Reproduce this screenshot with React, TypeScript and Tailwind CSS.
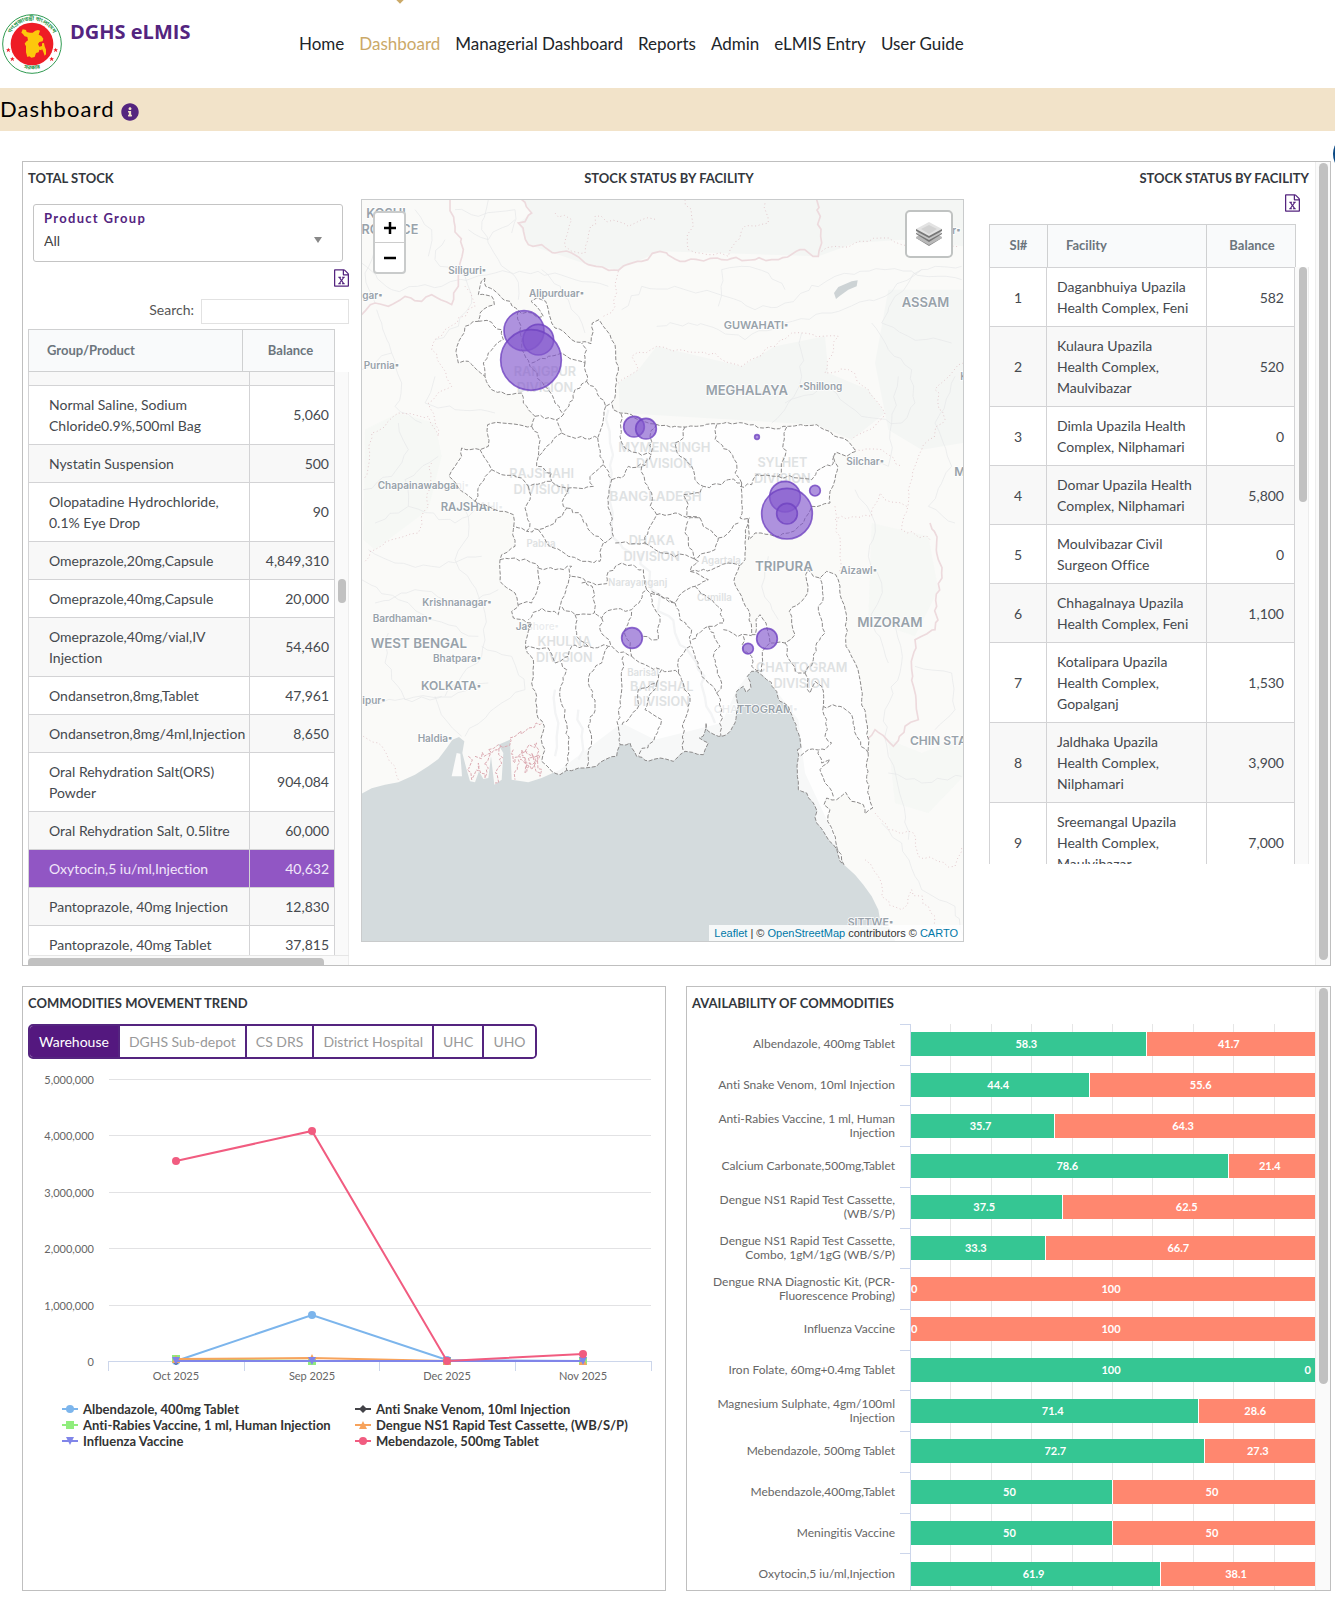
import { FaInfoCircle } from "react-icons/fa";

type Pt = [number, number];

/* ---------- shared pieces ---------- */

function ExcelIcon() {
  return (
    <svg viewBox="0 0 1536 1792" className="h-[18px] w-[15px]" fill="#54247f" aria-hidden="true">
      <path d="M1468 380q28 28 48 76t20 88v1152q0 40-28 68t-68 28h-1344q-40 0-68-28t-28-68v-1600q0-40 28-68t68-28h896q40 0 88 20t76 48zm-444-244v376h376q-10-29-22-41l-313-313q-12-12-41-22zm384 1528v-1024h-416q-40 0-68-28t-28-68v-416h-768v1536h1280zm-979-234v106h281v-106h-75l103-161q5-7 10-16.5t7.5-13.5 3.5-4h2q1 4 5 10 2 4 4.500 7.500t6 8 6.500 8.500l107 161h-76v106h291v-106h-68l-192-273 195-282h67v-107h-279v107h74l-103 159q-4 7-10 16.500t-9 13.500l-2 3h-2q-1-4-5-10-6-11-17-23l-106-159h76v-107h-290v107h68l189 272-194 283h-68z" />
    </svg>
  );
}

function PanelTitle({ children, align = "text-left" }: { children: string; align?: string }) {
  return <h2 className={"pt-1.5 text-[13px] leading-[21px] font-bold text-[#33373d] " + align}>{children}</h2>;
}

/* ---------- header ---------- */

function Logo() {
  return (
    <svg viewBox="0 0 180 180" className="h-[60px] w-[60px]" role="img" aria-label="Government seal">
      <circle cx="90" cy="90" r="88" fill="#fff" stroke="#2f9a51" strokeWidth="3" />
      <circle cx="90" cy="90" r="64" fill="#ee1c25" />
      <path
        fill="#fdc70c"
        d="M58 56l4-10 10 2 2 6 10 2 8 0 8-6 8-2 6 2-4 12 8 4 6 8-2 8-10 2-4 6 4 8 8-2 0-8 6-1 2 10 4 10 0 14-4 4-4-12-4-8-2 4-6-2-2 8-8 2-4 12-10 2-6-4-6 2-4-14 0-18-4-8 4-6 6-4-2-10-8-2-6-8z"
      />
      <defs>
        <path id="seal-top" d="M20 102a71 71 0 1 1 140 0" />
        <path id="seal-bottom" d="M42 150a79 79 0 0 0 96 0" />
      </defs>
      <g fill="#2f9a51" fontFamily="'Noto Sans Bengali','Noto Sans',sans-serif" fontSize="17" fontWeight="700">
        <text textAnchor="middle"><textPath href="#seal-top" startOffset="50%">গণপ্রজাতন্ত্রী বাংলাদেশ</textPath></text>
        <text textAnchor="middle"><textPath href="#seal-bottom" startOffset="50%">সরকার</textPath></text>
      </g>
      {[[19, 108], [31, 135], [149, 135], [161, 108]].map(([x, y]) => (
        <path key={x} fill="#ee1c25" transform={`translate(${x} ${y})`} d="M0-7l2 5 5 0-4 3 2 6-5-4-5 4 2-6-4-3 5 0z" />
      ))}
    </svg>
  );
}

const nav = ["Home", "Dashboard", "Managerial Dashboard", "Reports", "Admin", "eLMIS Entry", "User Guide"];

function Header() {
  return (
    <header className="flex h-[88px] items-start overflow-hidden">
      <div className="flex w-[299px] shrink-0 pt-[14px] pl-0.5">
        <Logo />
        <span className="ml-2 pt-1 font-['Open_Sans',sans-serif] text-[20px] leading-7 font-bold text-[#54247f]">DGHS eLMIS</span>
      </div>
      <nav className="flex gap-[15px] text-[17px] leading-6 text-[#212529]">
        {nav.map((n) => (
          <a key={n} href={"#" + n.replace(" ", "-")} className={"relative pt-8 whitespace-nowrap " + (n === "Dashboard" ? "text-[#cba968]" : "")}>
            {n === "Dashboard" && <span className="absolute -top-1.5 left-1/2 h-2 w-2 -translate-x-1/2 rotate-45 bg-[#cba968]" />}
            {n}
          </a>
        ))}
      </nav>
    </header>
  );
}

/* ---------- stock tables ---------- */

const products: [string, string][] = [
  ["Normal Saline, Sodium\nChloride0.9%,500ml Bag", "5,060"],
  ["Nystatin Suspension", "500"],
  ["Olopatadine Hydrochloride,\n0.1% Eye Drop", "90"],
  ["Omeprazole,20mg,Capsule", "4,849,310"],
  ["Omeprazole,40mg,Capsule", "20,000"],
  ["Omeprazole,40mg/vial,IV\nInjection", "54,460"],
  ["Ondansetron,8mg,Tablet", "47,961"],
  ["Ondansetron,8mg/4ml,Injection", "8,650"],
  ["Oral Rehydration Salt(ORS)\nPowder", "904,084"],
  ["Oral Rehydration Salt, 0.5litre", "60,000"],
  ["Oxytocin,5 iu/ml,Injection", "40,632"],
  ["Pantoprazole, 40mg Injection", "12,830"],
  ["Pantoprazole, 40mg Tablet", "37,815"],
];

function TotalStock() {
  return (
    <section className="flex flex-col">
      <PanelTitle>TOTAL STOCK</PanelTitle>
      <div className="relative mt-[15px] mr-1.5 ml-[5px] h-[58px] rounded-[3px] border border-[#c4c4c4] px-2.5 pt-1">
        <label htmlFor="group" className="block text-[13px] leading-[18px] font-bold tracking-widest text-[#54247f]">Product Group</label>
        <select id="group" className="block w-full appearance-none bg-transparent text-[14px] leading-7 text-[#444] outline-none">
          <option>All</option>
        </select>
        <svg viewBox="0 0 8 6" className="pointer-events-none absolute right-5 bottom-[18px] h-1.5 w-2"><path d="M0 0h8L4 6z" fill="#888" /></svg>
      </div>
      <div className="mt-[7px] flex justify-end"><button aria-label="Export to Excel"><ExcelIcon /></button></div>
      <div className="mt-3 flex items-start justify-end gap-[7px]">
        <label htmlFor="search" className="text-[14px] leading-[21px] text-[#555]">Search:</label>
        <input id="search" className="h-[25px] w-[148px] border border-[#e2e2e2] outline-none" />
      </div>
      <table className="mt-[5px] mr-3.5 table-fixed border-collapse border border-[#cfd0d1] bg-[#f9fafb] text-[13px] text-[#6c757d]">
        <thead>
          <tr className="h-[42px]">
            <th className="border border-[#cfd0d1] pl-[18px] text-left">Group/Product</th>
            <th className="w-[92px] border border-[#cfd0d1] pl-1 text-center">Balance</th>
          </tr>
        </thead>
      </table>
      <div className="flex h-[584px] border-b border-[#e6e6e6]">
        <div className="min-w-0 flex-1 overflow-hidden">
          <table className="w-full table-fixed border-collapse text-[14px] leading-[21px] text-[#45494e]">
            <colgroup><col /><col className="w-[85px]" /></colgroup>
            <tbody>
              <tr className="h-[13px] bg-[#f8f8f8]"><td className="border-x border-[#d3d3d5]" /><td className="border-x border-[#d3d3d5]" /></tr>
              {products.map(([name, n], i) => {
                const hot = name.startsWith("Oxytocin");
                return (
                  <tr key={name} className={hot ? "bg-[#9156c4] text-[#f1e6fa]" : i % 2 ? "bg-[#f8f8f8]" : "bg-white"}>
                    <td className="border border-[#d3d3d5] py-2 pl-5 whitespace-pre">{name}</td>
                    <td className="border border-[#d3d3d5] py-2 pr-[5px] text-right">{n}</td>
                  </tr>
                );
              })}
            </tbody>
          </table>
        </div>
        <div className="w-3.5 border-r border-[#ededed] bg-[#fafafa] pt-[207px] pl-[3px]"><div className="h-6 w-2 rounded-full bg-[#c1c1c1]" /></div>
      </div>
      <div className="h-[9px] overflow-hidden border-r border-[#ededed] bg-[#fafafa] pt-0.5"><div className="mr-6 h-2.5 rounded bg-[#c1c1c1]" /></div>
    </section>
  );
}

const facilities: [string, string][] = [
  ["Daganbhuiya Upazila\nHealth Complex, Feni", "582"],
  ["Kulaura Upazila\nHealth Complex,\nMaulvibazar", "520"],
  ["Dimla Upazila Health\nComplex, Nilphamari", "0"],
  ["Domar Upazila Health\nComplex, Nilphamari", "5,800"],
  ["Moulvibazar Civil\nSurgeon Office", "0"],
  ["Chhagalnaya Upazila\nHealth Complex, Feni", "1,100"],
  ["Kotalipara Upazila\nHealth Complex,\nGopalganj", "1,530"],
  ["Jaldhaka Upazila\nHealth Complex,\nNilphamari", "3,900"],
  ["Sreemangal Upazila\nHealth Complex,\nMaulvibazar", "7,000"],
];

function FacilityStock() {
  return (
    <section>
      <PanelTitle align="text-right">STOCK STATUS BY FACILITY</PanelTitle>
      <div className="mt-[5px] flex justify-end pr-[9px]"><button aria-label="Export to Excel"><ExcelIcon /></button></div>
      <div className="pt-3 pr-[13px]">
        <table className="w-full table-fixed border-collapse border border-[#cfd0d1] bg-[#f9fafb] text-[13px] text-[#6c757d]">
          <thead>
            <tr className="h-[43px]">
              <th className="w-[58px] border border-[#cfd0d1]">Sl#</th>
              <th className="border border-[#cfd0d1] pl-[18px] text-left">Facility</th>
              <th className="w-[89px] border border-[#cfd0d1] pl-0.5">Balance</th>
            </tr>
          </thead>
        </table>
      </div>
      <div className="-mt-px flex h-[597px]">
        <div className="min-w-0 flex-1 overflow-hidden">
          <table className="w-full table-fixed border-collapse text-[14px] leading-[21px] text-[#45494e]">
            <colgroup><col className="w-[57px]" /><col /><col className="w-[88px]" /></colgroup>
            <tbody>
              {facilities.map(([name, n], i) => (
                <tr key={name} className={i % 2 ? "bg-[#f8f8f8]" : "bg-white"}>
                  <td className="border border-[#d3d3d5] py-2 text-center">{i + 1}</td>
                  <td className="border border-[#d3d3d5] py-2 pl-2.5 whitespace-pre">{name}</td>
                  <td className="border border-[#d3d3d5] py-2 pr-2.5 text-right">{n}</td>
                </tr>
              ))}
            </tbody>
          </table>
        </div>
        <div className="w-3.5 border-r border-[#ededed] bg-[#fafafa] pl-1"><div className="h-[235px] w-2 rounded-full bg-[#c1c1c1]" /></div>
      </div>
    </section>
  );
}

/* ---------- map ---------- */

function random(seed: number) {
  let s = seed;
  return () => {
    s = (s * 16807) % 2147483647;
    return s / 2147483647 - 0.5;
  };
}

/* Breaks each segment into short, slightly displaced steps so borders look surveyed. */
function rough(pts: Pt[], seed: number, amp = 9, step = 14): string {
  const rnd = random(seed * 7919 + 13);
  let d = `M${pts[0][0]} ${pts[0][1]}`;
  for (let i = 1; i < pts.length; i++) {
    const [x0, y0] = pts[i - 1];
    const [x1, y1] = pts[i];
    const n = Math.max(1, Math.round(Math.hypot(x1 - x0, y1 - y0) / step));
    for (let k = 1; k <= n; k++) {
      const t = k / n;
      const a = k === n ? 0 : amp;
      d += `L${Math.round(x0 + (x1 - x0) * t + rnd() * a)} ${Math.round(y0 + (y1 - y0) * t + rnd() * a)}`;
    }
  }
  return d;
}

const country: Pt[] = [
  [390, 265], [392, 290], [415, 300], [440, 325], [465, 335], [482, 355], [500, 372], [530, 370], [548, 384], [565, 380], [545, 350], [528, 335], [545, 325], [572, 335], [580, 360], [590, 400], [600, 415], [625, 425], [650, 450], [675, 458], [708, 462], [715, 425], [712, 400], [732, 390], [745, 410], [765, 435], [780, 465], [782, 500], [790, 530], [785, 575], [782, 610], [770, 638], [775, 660], [795, 670], [830, 675], [850, 690], [915, 708], [975, 712], [1045, 708], [1085, 703], [1165, 700], [1225, 715], [1260, 718], [1300, 710], [1385, 705], [1435, 738], [1480, 755], [1503, 785], [1475, 800], [1445, 788], [1435, 800], [1448, 830], [1440, 870], [1425, 905], [1425, 940], [1395, 948], [1370, 950], [1345, 1000], [1300, 1030], [1260, 1040], [1200, 1030], [1180, 1050], [1180, 985], [1172, 1040], [1170, 1110], [1153, 1130], [1140, 1160], [1140, 1185], [1160, 1220], [1180, 1260], [1190, 1335], [1201, 1335], [1203, 1290], [1215, 1275], [1233, 1300], [1245, 1360], [1290, 1360], [1320, 1335], [1310, 1300], [1303, 1265], [1340, 1235], [1358, 1210], [1352, 1155], [1360, 1140], [1375, 1160], [1395, 1165], [1415, 1145], [1442, 1155], [1455, 1190], [1460, 1230], [1475, 1290], [1473, 1370], [1495, 1410], [1513, 1460], [1520, 1530], [1533, 1590], [1540, 1670], [1535, 1760], [1543, 1820], [1553, 1855], [1530, 1872], [1525, 1845], [1490, 1835], [1472, 1808], [1445, 1830], [1415, 1825], [1407, 1845], [1425, 1860], [1418, 1895], [1435, 1930], [1445, 1970], [1467, 2025], [1455, 2015], [1435, 1965], [1405, 1925], [1385, 1900], [1380, 1850], [1355, 1810], [1330, 1800], [1327, 1760], [1327, 1680], [1338, 1675], [1330, 1630], [1315, 1590], [1300, 1550], [1275, 1535], [1265, 1505], [1235, 1470], [1205, 1445], [1190, 1445], [1177, 1460], [1188, 1495], [1173, 1508], [1165, 1490], [1145, 1505], [1150, 1550], [1140, 1600], [1115, 1635], [1090, 1640], [1060, 1625], [1053, 1600], [1050, 1625], [1033, 1645], [1060, 1660], [1045, 1695], [990, 1685], [955, 1715], [915, 1705], [870, 1712], [845, 1700], [825, 1660], [795, 1665], [785, 1700], [750, 1710], [725, 1730], [690, 1735], [635, 1742], [615, 1755], [590, 1745], [560, 1715], [570, 1680], [558, 1645], [568, 1610], [545, 1570], [545, 1520], [530, 1480], [535, 1410], [512, 1375], [520, 1325], [530, 1300], [475, 1285], [470, 1265], [490, 1250], [480, 1210], [435, 1175], [435, 1110], [440, 1095], [480, 1070], [475, 1020], [475, 975], [420, 960], [360, 935], [320, 905], [282, 860], [300, 830], [320, 800], [320, 775], [345, 780], [375, 780], [400, 770], [398, 705], [440, 700], [490, 705], [530, 710], [540, 680], [520, 660], [505, 640], [500, 610], [455, 615], [410, 600], [390, 560], [340, 515], [310, 520], [303, 485], [320, 440], [330, 410], [370, 395], [375, 370], [400, 350], [418, 345], [410, 320], [370, 315], [375, 290], [390, 265],
];

const districts: Pt[][] = [
  [[370, 395], [410, 398], [440, 420], [445, 450], [400, 490], [385, 520], [390, 560]],
  [[490, 365], [495, 420], [500, 480], [525, 530], [580, 600], [600, 640], [625, 675], [605, 690], [540, 680]],
  [[530, 520], [580, 500], [620, 490], [690, 520], [695, 480], [680, 460]],
  [[690, 520], [695, 575], [660, 600], [655, 630], [625, 675]],
  [[695, 575], [715, 590], [735, 625], [752, 650], [770, 640]],
  [[752, 650], [728, 745], [650, 742], [620, 730], [605, 690]],
  [[620, 730], [575, 770], [550, 800], [545, 830], [590, 850], [590, 875]],
  [[530, 710], [550, 740], [550, 800]],
  [[728, 745], [735, 800], [745, 825], [705, 860], [715, 890], [640, 895], [590, 875], [520, 890], [500, 865], [440, 855], [410, 840], [375, 780]],
  [[410, 840], [375, 885], [360, 935]],
  [[520, 890], [525, 930], [510, 955], [525, 1000], [515, 1025], [475, 1010]],
  [[640, 895], [622, 935], [635, 955], [600, 1000], [550, 1020], [515, 1025]],
  [[635, 955], [680, 980], [710, 1030], [750, 1060], [775, 1040], [760, 940], [770, 870], [745, 825]],
  [[550, 1020], [575, 1060], [620, 1085], [640, 1100], [700, 1115], [735, 1115], [745, 1060]],
  [[798, 672], [795, 740], [810, 775], [850, 790], [888, 795], [885, 740], [905, 705]],
  [[770, 870], [800, 865], [820, 830], [870, 828], [888, 795]],
  [[860, 830], [870, 880], [890, 910], [885, 950], [905, 975], [880, 1020], [870, 1060], [780, 1060]],
  [[905, 975], [960, 970], [1000, 985], [1035, 985]],
  [[990, 712], [985, 745], [960, 760], [975, 800], [1010, 830], [1020, 870], [1045, 890]],
  [[1085, 705], [1080, 750], [1120, 780], [1145, 820], [1140, 850], [1160, 880], [1120, 870], [1100, 885], [1045, 890], [1035, 910], [985, 915], [1000, 945], [995, 980], [1035, 985]],
  [[1295, 712], [1285, 760], [1290, 800], [1270, 860], [1205, 855], [1190, 885], [1155, 890]],
  [[1270, 860], [1330, 865], [1370, 870], [1400, 835], [1435, 820], [1440, 790]],
  [[1160, 880], [1160, 940], [1155, 985], [1185, 985]],
  [[1035, 985], [1045, 1010], [1090, 1045], [1080, 1080], [1050, 1090], [1020, 1110], [1000, 1060], [990, 1030], [1000, 990]],
  [[1090, 1045], [1120, 1030], [1150, 1000]],
  [[870, 1060], [900, 1080], [950, 1095], [1000, 1100], [1030, 1115], [1005, 1145], [1070, 1140], [1120, 1120], [1155, 1128]],
  [[435, 1110], [510, 1108], [550, 1130], [555, 1180], [530, 1240], [490, 1245]],
  [[550, 1135], [600, 1140], [650, 1130], [640, 1180], [620, 1230], [610, 1275], [560, 1255], [520, 1290]],
  [[650, 1160], [680, 1165], [715, 1200], [718, 1270], [660, 1275], [620, 1250]],
  [[680, 1180], [755, 1182], [760, 1145], [800, 1120], [865, 1140], [875, 1200], [830, 1260], [770, 1260], [740, 1285], [718, 1270]],
  [[660, 1275], [665, 1340], [700, 1370], [760, 1370], [770, 1370]],
  [[740, 1285], [735, 1320], [755, 1345], [780, 1380], [830, 1400], [825, 1370], [810, 1320], [830, 1262]],
  [[512, 1375], [580, 1375], [600, 1420], [640, 1400], [650, 1370], [700, 1370]],
  [[620, 1420], [635, 1440], [615, 1500], [630, 1560], [635, 1600], [640, 1660], [635, 1742]],
  [[760, 1370], [740, 1420], [705, 1450], [700, 1480], [720, 1550], [700, 1610], [710, 1650], [695, 1735]],
  [[805, 1400], [800, 1480], [790, 1560], [790, 1610], [795, 1665]],
  [[830, 1400], [880, 1430], [920, 1440], [905, 1480], [850, 1500], [845, 1560], [800, 1610]],
  [[865, 1340], [910, 1350], [915, 1280], [890, 1240], [890, 1205], [960, 1240], [975, 1290], [1010, 1320], [1005, 1370], [970, 1410], [970, 1450], [920, 1440]],
  [[875, 1200], [920, 1220], [960, 1240], [980, 1210], [1020, 1190], [1060, 1170], [1005, 1145]],
  [[1020, 1190], [1060, 1225], [1100, 1260], [1105, 1300], [1060, 1310], [1010, 1350]],
  [[1105, 1320], [1140, 1335], [1190, 1338]],
  [[1060, 1310], [1095, 1370], [1075, 1400], [1100, 1480], [1085, 1510], [1040, 1460], [1010, 1370]],
  [[970, 1450], [1005, 1520], [1000, 1560], [985, 1600], [985, 1685]],
  [[1085, 1510], [1100, 1560], [1098, 1640]],
  [[905, 1480], [870, 1560], [920, 1590], [900, 1640], [850, 1700]],
  [[1165, 1340], [1165, 1380], [1190, 1400], [1190, 1430], [1220, 1445], [1222, 1385], [1245, 1360]],
  [[1290, 1360], [1295, 1395], [1330, 1450], [1350, 1450], [1375, 1410], [1385, 1360], [1410, 1330], [1390, 1250], [1405, 1220], [1395, 1165]],
  [[1350, 1450], [1365, 1510], [1380, 1475], [1400, 1490], [1405, 1550], [1455, 1550], [1490, 1575], [1505, 1640], [1540, 1690]],
  [[1405, 1550], [1415, 1590], [1410, 1640], [1430, 1660], [1410, 1680], [1360, 1680], [1335, 1700]],
  [[1390, 1685], [1400, 1720], [1425, 1710], [1395, 1740], [1410, 1780], [1435, 1820]],
];

const indianBorders: Pt[][] = [
  [[20, 375], [60, 340], [100, 350], [150, 320], [200, 335], [230, 315], [290, 345], [310, 290], [325, 180], [300, 110], [285, 30]],
  [[500, 30], [530, 70], [490, 100], [520, 165], [560, 165], [600, 190], [650, 190], [700, 225], [790, 242], [860, 215], [915, 185], [975, 215], [1100, 210], [1200, 210], [1270, 210], [1335, 180], [1390, 200], [1400, 160], [1385, 30]],
  [[1725, 1000], [1745, 1060], [1750, 1110], [1760, 1150], [1745, 1250], [1740, 1320], [1680, 1350], [1670, 1440], [1690, 1590], [1650, 1610], [1615, 1670], [1560, 1620], [1535, 1650]],
];

const stateBorders: Pt[][] = [
  [[330, 290], [360, 350], [270, 420], [230, 480], [260, 530], [290, 590], [220, 640], [250, 740], [220, 680], [130, 670], [50, 730], [40, 830], [25, 870]],
  [[230, 820], [220, 950], [190, 1030], [110, 1050], [60, 1080], [25, 1120]],
  [[600, 70], [650, 90], [630, 170], [690, 190], [720, 80], [820, 110], [860, 90], [905, 90]],
  [[990, 30], [1010, 80], [1000, 180], [1120, 200], [1160, 120], [1240, 100], [1230, 40]],
  [[1400, 185], [1500, 160], [1580, 145], [1640, 165], [1810, 170]],
  [[790, 245], [780, 350], [745, 380]],
  [[790, 580], [850, 540], [830, 500], [905, 470], [970, 480], [1080, 490], [1160, 530], [1230, 480], [1260, 470], [1310, 430], [1450, 440], [1410, 550], [1480, 540], [1540, 600], [1590, 670], [1560, 710], [1490, 750]],
  [[1825, 520], [1740, 600], [1770, 690], [1700, 780], [1660, 900], [1640, 1020], [1725, 1050]],
  [[1500, 780], [1580, 780], [1640, 830]],
  [[1440, 950], [1455, 1100], [1450, 1150]],
  [[1440, 990], [1550, 980], [1575, 910], [1590, 930], [1655, 950]],
  [[1560, 1870], [1600, 1920], [1675, 1930], [1690, 2000], [1800, 2030], [1820, 1970]],
  [[1530, 2010], [1570, 2060], [1580, 2120], [1640, 2160], [1670, 2100], [1720, 2150], [1750, 2220]],
  [[25, 1640], [70, 1660], [120, 1730], [130, 1770]],
];

const roads: Pt[][] = [
  [[400, 30], [380, 120], [430, 210], [480, 260], [490, 330]],
  [[270, 150], [240, 210], [330, 260], [350, 340], [310, 410], [240, 450]],
  [[65, 360], [80, 400], [110, 490], [60, 520], [20, 540]],
  [[110, 490], [140, 580], [120, 650], [200, 700]],
  [[240, 560], [210, 640], [300, 660], [420, 670]],
  [[25, 900], [110, 860], [160, 780], [130, 700]],
  [[60, 1000], [160, 950], [300, 1000], [360, 960]],
  [[330, 960], [340, 1040], [300, 1110], [350, 1180], [390, 1270], [380, 1400], [270, 1520]],
  [[20, 1170], [130, 1230], [230, 1290], [370, 1340]],
  [[40, 1080], [120, 1120], [230, 1130], [380, 1100]],
  [[100, 1330], [90, 1420], [150, 1530], [260, 1520]],
  [[380, 1370], [470, 1400], [510, 1500], [440, 1540], [330, 1640]],
  [[240, 1520], [280, 1600], [320, 1640]],
  [[300, 60], [370, 80], [480, 60], [470, 130]],
  [[340, 120], [400, 150], [480, 90]],
  [[20, 220], [110, 300], [260, 290], [420, 250], [600, 250], [760, 290]],
  [[60, 180], [30, 250], [60, 340]],
  [[180, 60], [230, 120], [220, 200]],
  [[560, 240], [640, 330], [690, 430]],
  [[20, 1540], [120, 1532], [260, 1522], [400, 1480]],
  [[60, 1240], [180, 1200], [320, 1240], [430, 1200]],
  [[160, 950], [150, 870], [250, 800]],
  [[800, 360], [860, 290], [990, 300], [1080, 310], [1200, 360], [1290, 340], [1440, 260], [1590, 240], [1820, 270]],
  [[905, 410], [1000, 400], [1090, 420], [1170, 450], [1290, 400], [1430, 370], [1590, 320], [1700, 240], [1820, 230]],
  [[1090, 350], [1100, 240], [1160, 230], [1240, 250], [1290, 300]],
  [[1340, 430], [1340, 560], [1300, 640], [1250, 700]],
  [[1290, 640], [1420, 590], [1520, 680], [1640, 700], [1680, 640], [1670, 540], [1600, 480], [1550, 400]],
  [[1700, 240], [1620, 320], [1580, 400], [1660, 440], [1790, 460]],
  [[1480, 820], [1600, 830], [1610, 700], [1630, 560]],
  [[1500, 900], [1560, 1000], [1540, 1100], [1580, 1180], [1550, 1300], [1600, 1420]],
  [[1620, 1290], [1640, 1420], [1590, 1560], [1600, 1700], [1640, 1830], [1660, 1950]],
  [[1680, 1430], [1790, 1450], [1800, 1560], [1740, 1620]],
  [[1800, 560], [1740, 700], [1790, 830], [1720, 950], [1800, 1000]],
  [[1240, 1100], [1220, 1190], [1270, 1290]],
  [[1580, 1900], [1640, 1960], [1700, 2100], [1800, 2150], [1825, 2240]],
  [[1600, 1750], [1700, 1780], [1820, 1760]],
];

const mangroves: Pt[][] = [
  [[340, 1700], [350, 1770], [370, 1720], [390, 1765], [400, 1680], [430, 1665], [440, 1720], [420, 1780]],
  [[360, 1700], [410, 1690], [440, 1670], [480, 1640], [520, 1615], [560, 1600]],
  [[475, 1680], [480, 1720], [500, 1680], [510, 1750], [530, 1690], [555, 1760], [550, 1700], [530, 1740], [490, 1710], [480, 1770]],
  [[490, 1700], [520, 1720], [550, 1710], [545, 1660], [500, 1690], [540, 1700]],
];

type Label = { t: string; x: number; y: number; s?: number; dot?: "l" | "r" };
const labels: Label[] = [
  { t: "Siliguri", x: 280, y: 252, dot: "r" },
  { t: "Alipurduar", x: 522, y: 323, dot: "r" },
  { t: "gar", x: 22, y: 329, dot: "r" },
  { t: "Purnia", x: 26, y: 538, dot: "r" },
  { t: "GUWAHATI", x: 1106, y: 417, s: 33, dot: "r" },
  { t: "ASSAM", x: 1640, y: 351, s: 39 },
  { t: "MEGHALAYA", x: 1052, y: 615, s: 39 },
  { t: "Shillong", x: 1332, y: 600, dot: "l" },
  { t: "Silchar", x: 1474, y: 825, dot: "r" },
  { t: "r", x: 1792, y: 134, dot: "r" },
  { t: "K", x: 1816, y: 572 },
  { t: "M", x: 1798, y: 859, s: 36 },
  { t: "TRIPURA", x: 1200, y: 1143, s: 40 },
  { t: "Aizawl", x: 1456, y: 1154, dot: "r" },
  { t: "MIZORAM", x: 1507, y: 1311, s: 40 },
  { t: "CHIN STATE", x: 1665, y: 1666, s: 36 },
  { t: "Krishnanagar", x: 202, y: 1250, dot: "r" },
  { t: "Bardhaman", x: 53, y: 1298, dot: "r" },
  { t: "WEST BENGAL", x: 47, y: 1376, s: 40 },
  { t: "Bhatpara", x: 234, y: 1417, dot: "r" },
  { t: "KOLKATA", x: 198, y: 1501, s: 36, dot: "r" },
  { t: "ipur", x: 22, y: 1543, dot: "r" },
  { t: "Haldia", x: 188, y: 1658, dot: "r" },
  { t: "SITTWE", x: 1478, y: 2210, s: 32, dot: "r" },
  { t: "KOSHI", x: 34, y: 86, s: 38 },
  { t: "PROVINCE", x: -5, y: 133, s: 38 },
];
const underLabels: Label[] = [
  { t: "Chapainawabganj", x: 68, y: 898, dot: "r" },
  { t: "RAJSHAHI", x: 257, y: 965, s: 34, dot: "r" },
  { t: "Jashore", x: 482, y: 1321, dot: "r" },
  { t: "CHATTOGRAM", x: 1076, y: 1569, s: 33, dot: "r" },
];
const faint: [string, number, number, number?][] = [
  ["RANGPUR", 570, 560], ["DIVISION", 570, 608], ["RAJSHAHI", 560, 866], ["DIVISION", 560, 912],
  ["MYMENSINGH", 928, 787, 39], ["DIVISION", 928, 834], ["BANGLADESH", 902, 934, 40], ["SYLHET", 1282, 833],
  ["DIVISION", 1282, 879], ["DHAKA", 890, 1066], ["DIVISION", 890, 1114], ["KHULNA", 628, 1368],
  ["DIVISION", 628, 1416], ["BARISHAL", 920, 1503], ["DIVISION", 920, 1550], ["CHATTOGRAM", 1340, 1446],
  ["DIVISION", 1340, 1494], ["Pabna", 558, 1071, 29], ["Narayanganj", 848, 1189, 29], ["Agartala", 1098, 1122, 29],
  ["Cumilla", 1078, 1234, 29], ["Barisal", 864, 1458, 29],
];

const bubbles: [number, number, number][] = [
  [507, 423, 60], [550, 450, 46], [528, 511, 91], [837, 711, 31], [873, 717, 31], [1206, 742, 7], [1380, 903, 16],
  [1290, 921, 46], [1296, 972, 76], [1296, 972, 31], [831, 1345, 31], [1236, 1347, 31], [1179, 1377, 16],
];

function PlaceLabels({ items }: { items: Label[] }) {
  return (
    <g fill="#98a2aa" fontFamily="Inter, sans-serif" fontWeight="600">
      {items.map((l) => (
        <text key={l.t} x={l.x} y={l.y} fontSize={l.s ?? 30} stroke="#fff" strokeWidth="4" paintOrder="stroke">
          {l.dot === "l" && <tspan fontSize="26" dy="-3">▪</tspan>}
          <tspan dy={l.dot === "l" ? 3 : 0}>{l.t}</tspan>
          {l.dot === "r" && <tspan fontSize="26" dy="-3">▪</tspan>}
        </text>
      ))}
    </g>
  );
}

function StockMap() {
  const outline = rough(country, 3, 8, 16);
  return (
    <section className="flex flex-col">
      <PanelTitle align="text-center">STOCK STATUS BY FACILITY</PanelTitle>
      <div className="relative mt-2.5 mr-[13px] h-[743px] overflow-hidden border border-[#c9cbcc] bg-[#fafaf8]">
        <svg viewBox="21 31 1803 2223" preserveAspectRatio="xMidYMid slice" className="h-full w-full" role="img" aria-label="Stock by facility map">
          <g fill="#f4f6f4">
            <path d="M500 30L530 70 490 100 520 165 700 225 790 240 915 185 1390 200 1500 160 1640 150 1825 170V30z" />
            <path d="M790 580L850 540 905 470 1160 530 1260 470 1410 440 1420 550 1540 600 1590 670 1490 750 1385 705 795 670z" />
            <path d="M1600 300H1825V760L1700 780 1600 720 1560 520z" />
            <path d="M30 720L130 670 240 700 260 800 220 960 60 1080 25 1050z" opacity=".6" />
            <path d="M1600 1650L1700 1690 1825 1640V1760L1720 1870 1620 1840z" opacity=".7" />
            <path d="M1550 1000L1720 1040 1750 1200 1680 1340 1540 1290z" opacity=".6" />
          </g>
          <path
            fill="#d4dbdd"
            d="M20 1812L50 1796 90 1785 130 1778 180 1755 220 1730 250 1708 275 1675 292 1650 312 1642 328 1655 322 1690 335 1740 345 1775 360 1778 372 1745 385 1768 400 1765 408 1700 418 1785 440 1770 445 1690 430 1665 465 1650 470 1770 520 1778 560 1765 615 1740 800 1600 900 1650 1100 1600 1145 1500 1190 1440 1215 1440 1330 1590 1350 1750 1420 1900 1467 2025 1500 2055 1525 2085 1550 2120 1570 2160 1575 2190 1605 2215 1620 2254H20z"
          />
          <path fill="#fbfbfa" d="M305 1690L316 1692 321 1760 290 1760z" />
          <path fill="#cdd3d5" d="M1437 310L1450 292 1490 275 1508 272 1505 290 1480 300 1455 318 1443 328z" />
          <g fill="none" stroke="#e6e7e8" strokeWidth="2">{roads.map((r, i) => <path key={i} d={rough(r, i + 40, 16, 26)} />)}</g>
          <g fill="none" stroke="#dfbfc4" strokeWidth="2.5" strokeDasharray="3 8">{stateBorders.map((r, i) => <path key={i} d={rough(r, i + 80, 16, 20)} />)}</g>
          <g fill="none" stroke="#eddadd" strokeWidth="5">{indianBorders.map((r, i) => <path key={i} d={rough(r, i + 120, 14, 18)} />)}</g>
          <g fill="none" stroke="#dcaab2" strokeWidth="3" strokeDasharray="9 4">{mangroves.map((r, i) => <path key={i} d={rough(r, i + 160, 18, 10)} />)}</g>
          <PlaceLabels items={underLabels} />
          <path d={outline} fill="#fff" fillOpacity=".8" />
          <g fill="none" stroke="#f3f4f5" strokeWidth="7">
            <path d={rough([[860, 1090], [890, 1200], [960, 1330], [1030, 1440], [1080, 1600]], 210, 24, 30)} />
            <path d={rough([[760, 660], [770, 850], [770, 1040], [830, 1090]], 211, 20, 30)} />
            <path d={rough([[600, 1500], [610, 1600], [600, 1700]], 212, 20, 30)} />
            <path d={rough([[670, 1560], [680, 1640], [670, 1710]], 213, 20, 30)} />
          </g>
          <g fill="#dfe2e3" fontFamily="Inter, sans-serif" fontWeight="600" textAnchor="middle">
            {faint.map(([t, x, y, s], i) => <text key={i} x={x} y={y} fontSize={s ?? 38}>{t}</text>)}
          </g>
          <g fill="none" stroke="#8c8a8a" strokeWidth="3" strokeDasharray="12 5">
            <path d={outline} />
            {districts.map((r, i) => <path key={i} d={rough(r, i + 1, 11, 14)} />)}
          </g>
          <PlaceLabels items={labels} />
          <g fill="#8257cc" fillOpacity=".65" stroke="#6f42c1" strokeOpacity=".8" strokeWidth="5">
            {bubbles.map(([x, y, r], i) => <circle key={i} cx={x} cy={y} r={r} />)}
          </g>
        </svg>
        <div className="absolute top-[11px] left-[11px] flex flex-col rounded-[4px] border-2 border-[#c9cbcb] bg-white">
          <button aria-label="Zoom in" className="flex h-[30px] w-[29px] items-center justify-center border-b border-[#ccc]">
            <svg viewBox="0 0 14 14" className="h-3.5 w-3.5"><path d="M1 7h12M7 1v12" stroke="#000" strokeWidth="2.500" /></svg>
          </button>
          <button aria-label="Zoom out" className="flex h-[29px] w-[29px] items-center justify-center">
            <svg viewBox="0 0 14 14" className="h-3.5 w-3.5"><path d="M1 7h12" stroke="#000" strokeWidth="2.500" /></svg>
          </button>
        </div>
        <button aria-label="Layers" className="absolute top-2.5 right-2.5 flex h-12 w-12 items-center justify-center rounded-[5px] border-2 border-[#c0c3c2] bg-white">
          <svg viewBox="0 0 26 26" className="h-[26px] w-[26px]">
            <path d="M0 17l13 8 13-8-13-6z" fill="#858585" />
            <path d="M0 17l13 7 13-7v-1L13 8 0 16z" fill="#b9b9b9" />
            <path d="M0 13l13 8 13-8v-1H0z" fill="#777" />
            <path d="M0 12l13 7 13-7-13-6z" fill="#c4c4c4" />
            <path d="M0 8v2l13 7 13-7V8z" fill="#777" />
            <path d="M0 8l13-7 13 7-13 7z" fill="#e3e3e3" />
            <path d="M5 8l8-4 8 4-8 5z" fill="#d2d2d2" />
          </svg>
        </button>
        <div className="absolute right-0 bottom-0 bg-white/80 px-[5px] font-['Liberation_Sans',sans-serif] text-[11px] leading-4 text-[#333]">
          <a href="#leaflet" className="text-[#0078a8]">Leaflet</a> | © <a href="#osm" className="text-[#0078a8]">OpenStreetMap</a> contributors © <a href="#carto" className="text-[#0078a8]">CARTO</a>
        </div>
      </div>
    </section>
  );
}

/* ---------- trend chart ---------- */

const tabs = ["Warehouse", "DGHS Sub-depot", "CS DRS", "District Hospital", "UHC", "UHO"];
const months = ["Oct 2025", "Sep 2025", "Dec 2025", "Nov 2025"];
const monthX = [153, 289, 424, 560];
const valueY = (v: number) => Math.round(302 - v * 56.4);

type Shape = "circle" | "diamond" | "square" | "up" | "down";
const series: { name: string; color: string; shape: Shape; data: number[] }[] = [
  { name: "Albendazole, 400mg Tablet", color: "#7cb5ec", shape: "circle", data: [0, 0.82, 0.01, 0] },
  { name: "Anti Snake Venom, 10ml Injection", color: "#434348", shape: "diamond", data: [0, 0, 0, 0] },
  { name: "Anti-Rabies Vaccine, 1 ml, Human Injection", color: "#90ed7d", shape: "square", data: [0.03, 0, 0, 0] },
  { name: "Dengue NS1 Rapid Test Cassette, (WB/S/P)", color: "#f7a35c", shape: "up", data: [0.03, 0.06, 0, 0] },
  { name: "Influenza Vaccine", color: "#8085e9", shape: "down", data: [0, 0, 0, 0] },
  { name: "Mebendazole, 500mg Tablet", color: "#f15c80", shape: "circle", data: [3.55, 4.07, 0, 0.13] },
];

function Marker({ x, y, shape, color }: { x: number; y: number; shape: Shape; color: string }) {
  const d = {
    circle: "M-4 0a4 4 0 1 0 8 0a4 4 0 1 0-8 0",
    diamond: "M0-4L4 0 0 4-4 0z",
    square: "M-4-4h8v8h-8z",
    up: "M0-4L4 4h-8z",
    down: "M0 4L4-4h-8z",
  }[shape];
  return <path d={d} fill={color} transform={`translate(${x} ${y})`} />;
}

function Trend() {
  return (
    <section className="border border-[#bfbfbf] px-[5px]">
      <PanelTitle>COMMODITIES MOVEMENT TREND</PanelTitle>
      <div role="tablist" className="mt-[10px] flex h-[35px] w-fit divide-x-2 divide-[#54247f] overflow-hidden rounded-[5px] border-2 border-[#54247f] text-[14px] text-[#999]">
        {tabs.map((t, i) => (
          <button key={t} role="tab" aria-selected={i === 0} className={"px-[9px] whitespace-nowrap " + (i === 0 ? "bg-[#54187f] text-white" : "bg-white")}>{t}</button>
        ))}
      </div>
      <svg viewBox="5 0 632 324" className="block w-full" role="img" aria-label="Commodities movement">
        <g stroke="#e2e2e4" strokeWidth="1">
          {[1, 2, 3, 4, 5].map((v) => <path key={v} d={`M86 ${valueY(v) + 0.5}H628`} />)}
        </g>
        <path d="M85.500 302.500H628.500M85.500 302v10M221.500 302v10M356.500 302v10M492.500 302v10M628.500 302v10" stroke="#ccd6eb" fill="none" />
        <g fill="#666" fontFamily="Lato, sans-serif" fontSize="11">
          {[0, 1, 2, 3, 4, 5].map((v) => <text key={v} x="71" y={valueY(v) + 5} textAnchor="end">{v ? v + ",000,000" : "0"}</text>)}
          {months.map((m, i) => <text key={m} x={monthX[i]} y="321" textAnchor="middle">{m}</text>)}
        </g>
        {series.map((s) => (
          <g key={s.name}>
            <path d={s.data.map((v, i) => `${i ? "L" : "M"}${monthX[i]} ${valueY(v)}`).join("")} fill="none" stroke={s.color} strokeWidth="2" />
            {s.data.map((v, i) => <Marker key={i} x={monthX[i]} y={valueY(v)} shape={s.shape} color={s.color} />)}
          </g>
        ))}
      </svg>
      <ul className="mt-[18px] ml-[34px] grid grid-cols-[293px_1fr] text-[13px] leading-4 font-bold text-[#333]">
        {series.map((s) => (
          <li key={s.name} className="flex items-center gap-[5px] whitespace-nowrap">
            <svg viewBox="0 0 16 10" className="h-2.5 w-4"><path d="M0 5h16" stroke={s.color} strokeWidth="2" /><Marker x={8} y={5} shape={s.shape} color={s.color} /></svg>
            {s.name}
          </li>
        ))}
      </ul>
    </section>
  );
}

/* ---------- availability chart ---------- */

const availability: [string, number][] = [
  ["Albendazole, 400mg Tablet", 58.3],
  ["Anti Snake Venom, 10ml Injection", 44.4],
  ["Anti-Rabies Vaccine, 1 ml, Human\nInjection", 35.7],
  ["Calcium Carbonate,500mg,Tablet", 78.6],
  ["Dengue NS1 Rapid Test Cassette,\n(WB/S/P)", 37.5],
  ["Dengue NS1 Rapid Test Cassette,\nCombo, 1gM/1gG (WB/S/P)", 33.3],
  ["Dengue RNA Diagnostic Kit, (PCR-\nFluorescence Probing)", 0],
  ["Influenza Vaccine", 0],
  ["Iron Folate, 60mg+0.4mg Tablet", 100],
  ["Magnesium Sulphate, 4gm/100ml\nInjection", 71.4],
  ["Mebendazole, 500mg Tablet", 72.7],
  ["Mebendazole,400mg,Tablet", 50],
  ["Meningitis Vaccine", 50],
  ["Oxytocin,5 iu/ml,Injection", 61.9],
];

function Availability() {
  return (
    <section className="flex border border-[#bfbfbf]">
      <div className="min-w-0 flex-1">
        <div className="pl-[5px]"><PanelTitle>AVAILABILITY OF COMMODITIES</PanelTitle></div>
        <div className="mt-[10px] h-[566px] overflow-hidden">
          <ul className="grid h-[570px] auto-rows-fr">
            {availability.map(([name, v]) => (
              <li key={name} className="grid grid-cols-[208px_10px_1fr] gap-x-[5px]">
                <span className="self-center text-right text-[12px] leading-[14px] whitespace-pre text-[#666]">{name}</span>
                <div className="col-span-2 grid grid-cols-[10px_1fr]">
                  <span className="border-t border-[#ccd6eb]" />
                  <div className="grid border-l border-[#ccd6eb]">
                    <div className="col-start-1 row-start-1 grid grid-cols-10 divide-x divide-[#e6e6e6]">
                      {Array.from({ length: 10 }, (_, k) => <span key={k} />)}
                    </div>
                    <div className="col-start-1 row-start-1 my-auto flex h-6 text-center text-[11px] leading-6 font-bold text-white">
                      {v > 0 ? (
                        <span className={"relative bg-[#35c693] pr-1 " + (v < 100 ? "border-r border-white" : "")} style={{ width: `${v}%` }}>{v}{v === 100 && <i className="absolute right-1 not-italic">0</i>}</span>
                      ) : null}
                      {v < 100 && (
                        <span className="relative flex-1 bg-[#ff876f] pr-1">{v === 0 && <i className="absolute left-0 not-italic">0</i>}{Math.round((100 - v) * 10) / 10}</span>
                      )}
                    </div>
                  </div>
                </div>
              </li>
            ))}
          </ul>
        </div>
      </div>
      <div className="w-[15px] border-l border-[#ededed] bg-[#fafafa] pt-px pl-[3px]"><div className="h-[396px] w-[9px] rounded-full bg-[#c1c1c1]" /></div>
    </section>
  );
}

/* ---------- page ---------- */

export default function App() {
  return (
    <div className="relative min-h-screen overflow-hidden bg-white font-[Lato,sans-serif] text-[#333] [font-variant-ligatures:none]">
      <Header />
      <div className="flex h-[43px] items-center gap-1.5 bg-[#f2e3c9]">
        <h1 className="pb-0.5 text-[22px] leading-7 tracking-wider text-black">Dashboard</h1>
        <FaInfoCircle className="mt-1 h-[18px] w-[18px] shrink-0 text-[#54247f]" />
      </div>
      <button aria-label="Help" className="absolute top-[134px] -right-[38px] h-10 w-10 rounded-full bg-[#0b4a85]" />
      <main className="relative pt-[30px] pr-1 pb-2.5 pl-[22px]">
        <div className="flex border border-[#bfbfbf] bg-white">
          <div className="grid min-w-0 flex-1 grid-cols-[321px_minmax(0,1fr)_320px] gap-3 pr-1.5 pl-[5px]">
            <TotalStock />
            <StockMap />
            <FacilityStock />
          </div>
          <div className="w-[15px] border-l border-[#ededed] bg-[#fafafa] pt-px pl-[3px]"><div className="h-[797px] w-[9px] rounded-full bg-[#c1c1c1]" /></div>
        </div>
        <div className="mt-5 grid grid-cols-[minmax(0,644fr)_minmax(0,645fr)] gap-5">
          <Trend />
          <Availability />
        </div>
      </main>
    </div>
  );
}
